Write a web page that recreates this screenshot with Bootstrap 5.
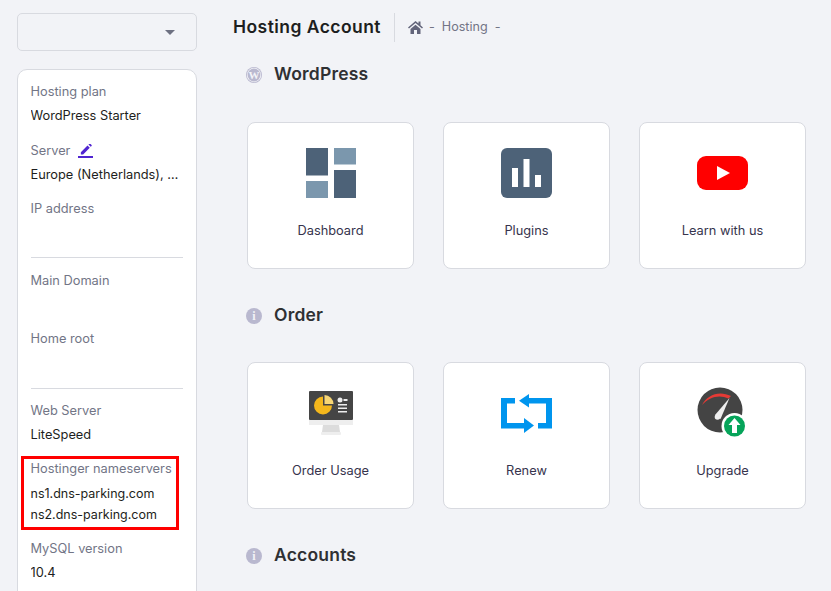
<!DOCTYPE html>
<html lang="en">
<head>
<meta charset="utf-8">
<title>Hosting Account</title>
<link href="https://cdn.jsdelivr.net/npm/bootstrap@5.3.0/dist/css/bootstrap.min.css" rel="stylesheet">
<style>
html,body{height:100%;overflow:hidden}
body{background:#f2f3f7;font-family:Inter,"Liberation Sans",sans-serif;font-size:12.800px;color:#1d1e20}
.shell{height:591px;overflow:hidden;gap:36px;padding:13px 0 0 17px}
.side{width:180px;flex:none}
.pick{height:38px;border:1px solid #d8dae0;border-radius:5px;padding-right:21px;margin-bottom:18px}
.pick i{border:5px solid transparent;border-top-color:#6d7081;border-bottom:0;display:block}
.info{border:1px solid #d8dae0;border-radius:10px 10px 0 0;padding:9px 13px 0 12.5px;height:600px;background:#fff}
.fld{margin-bottom:10px}
.fld-first{margin-bottom:11px}
.lbl{color:#727586;line-height:22px;padding-top:2px}
.val{color:#1d1e20;line-height:22px;padding-top:2px;min-height:24px;white-space:nowrap;overflow:hidden;text-overflow:ellipsis}
.sep{border:0;border-top:1px solid #d8dae0;opacity:1;margin:3px 0 10px}
.sep-b{margin:4px 0 9px}
.ns{margin:2.5px 0 1px;line-height:21px;color:#1d1e20;font-size:12.500px}
.mark-box{position:absolute;left:-10px;top:0;width:158px;height:74px;border:3px solid #f00;pointer-events:none}
.main-col{width:590px;flex:none}
.topline{height:29px;margin-bottom:18px}
.ttl{font-size:17.500px;font-weight:600;letter-spacing:.45px;color:#1d1e20;margin:0 0 2px}
.vbar{width:1px;height:29px;background:#d8dae0;margin:0 13px}
.crumb{color:#727586;gap:7px;font-size:12.600px}
.crumb svg{margin-right:-1px}
.sec{margin-left:13px;height:29px;gap:12px;margin-bottom:32px}
.sec-first{margin-bottom:33px}
.sec h2{font-size:17.500px;font-weight:600;margin:0 0 2px;letter-spacing:.2px;color:#2f3033}
.tiles{margin-left:14px;gap:29px;margin-bottom:32px}
.tile{width:167px;height:147px;border:1px solid #d8dae0;border-radius:8px;background:#fff;padding-top:25px;color:#36344d}
.tile svg{display:block;flex:none;overflow:visible}
.tile span{margin-top:21px;line-height:24px}
</style>
</head>
<body>
<div class="shell d-flex">
  <aside class="side">
    <div class="pick d-flex align-items-center justify-content-end"><i></i></div>
    <div class="card info">
      <div class="fld fld-first"><div class="lbl">Hosting plan</div><div class="val">WordPress Starter</div></div>
      <div class="fld"><div class="lbl d-flex align-items-center gap-2">Server
        <svg width="16" height="14" viewBox="0 0 16 14"><path d="M3 9.200 10 2.200l2.400 2.400-7 7H3z M11 1.200 12 .4a.8.8 0 0 1 1 0l1.300 1.300a.8.8 0 0 1 0 1L13.400 3.600z" fill="#5025d1" transform="translate(0 -.6) scale(.95)"/><rect x="0" y="12" width="15" height="2" fill="#5025d1"/></svg></div>
        <div class="val">Europe (Netherlands), server 12</div></div>
      <div class="fld"><div class="lbl">IP address</div><div class="val"></div></div>
      <hr class="sep">
      <div class="fld"><div class="lbl">Main Domain</div><div class="val"></div></div>
      <div class="fld"><div class="lbl">Home root</div><div class="val"></div></div>
      <hr class="sep sep-b">
      <div class="fld"><div class="lbl">Web Server</div><div class="val">LiteSpeed</div></div>
      <div class="fld position-relative">
        <div class="lbl">Hostinger nameservers</div>
        <div class="ns">ns1.dns-parking.com<br>ns2.dns-parking.com</div>
        <span class="mark-box"></span>
      </div>
      <div class="fld"><div class="lbl">MySQL version</div><div class="val">10.4</div></div>
    </div>
  </aside>
  <main class="main-col">
    <div class="topline d-flex align-items-center">
      <h1 class="ttl">Hosting Account</h1>
      <div class="vbar"></div>
      <div class="crumb d-flex align-items-center">
        <svg width="15" height="13" viewBox="0 0 15 13"><path d="M7.500 0 0 6.500l1 1.100 6.500-5.600 6.500 5.600 1-1.100-2.500-2.200V.6h-2v1.900z M2.500 8 7.500 3.700 12.500 8v5H9V9H6v4H2.500z" fill="#62647a"/></svg>
        <span>-</span><span>Hosting</span><span>-</span>
      </div>
    </div>

    <div class="sec sec-first d-flex align-items-center">
      <svg width="16" height="16" viewBox="0 0 16 16"><circle cx="8" cy="8" r="8" fill="#b9b8cf"/><circle cx="8" cy="8" r="7.200" fill="#f2f3f7"/><circle cx="8" cy="8" r="6.400" fill="#b9b8cf"/><text x="8" y="11.800" text-anchor="middle" font-family="Liberation Serif" font-size="11" font-weight="700" fill="#f2f3f7">W</text></svg>
      <h2>WordPress</h2>
    </div>
    <div class="tiles d-flex">
      <div class="tile d-flex flex-column align-items-center">
        <svg width="50" height="50" viewBox="0 0 50 50"><rect x="0" y="0" width="22" height="27.500" fill="#4d6278"/><rect x="28" y="0" width="22" height="16.500" fill="#7b97ad"/><rect x="28" y="22" width="22" height="28" fill="#4d6278"/><rect x="0" y="33" width="22" height="17" fill="#7b97ad"/></svg>
        <span>Dashboard</span>
      </div>
      <div class="tile d-flex flex-column align-items-center">
        <svg width="51" height="50" viewBox="0 0 51 50"><rect width="51" height="50" rx="6" fill="#4d6278"/><rect x="11" y="20" width="6" height="19" fill="#fff"/><rect x="22.500" y="11" width="6" height="28" fill="#fff"/><rect x="34" y="27" width="6" height="12" fill="#fff"/></svg>
        <span>Plugins</span>
      </div>
      <div class="tile d-flex flex-column align-items-center">
        <svg width="51" height="50" viewBox="0 0 51 50"><rect x="0" y="8" width="51" height="34" rx="9" fill="#f00"/><path d="M20 18 33 25 20 32z" fill="#fff"/></svg>
        <span>Learn with us</span>
      </div>
    </div>

    <div class="sec d-flex align-items-center">
      <svg width="16" height="16" viewBox="0 0 16 16"><circle cx="8" cy="8" r="8" fill="#b9b8cf"/><text x="8" y="12" text-anchor="middle" font-family="Liberation Serif" font-size="12" font-weight="700" fill="#f2f3f7">i</text></svg>
      <h2>Order</h2>
    </div>
    <div class="tiles d-flex">
      <div class="tile d-flex flex-column align-items-center">
        <svg width="50" height="50" viewBox="0 0 50 50"><g transform="translate(0 -1)"><rect x="3" y="4" width="44" height="29" rx="1" fill="#454545"/><rect x="3" y="33" width="44" height="5" fill="#eeeeee"/><path d="M17 38h16l1 7H16z" fill="#dcdcdc"/><rect x="15" y="45" width="20" height="3" rx="1" fill="#eeeeee"/><path d="M17 9.500a9 9 0 1 0 9 9h-9z" fill="#f4b71c"/><path d="M18.500 8a9 9 0 0 1 9 9h-9z" fill="#f7d675"/><circle cx="34" cy="13" r="2.500" fill="#eeeeee"/><rect x="37.500" y="12" width="4" height="2" fill="#eeeeee"/><rect x="32" y="17" width="9" height="1.500" fill="#eeeeee"/><rect x="32" y="20.500" width="9" height="1.500" fill="#eeeeee"/><rect x="32" y="24" width="9" height="1.500" fill="#eeeeee"/></g></svg>
        <span>Order Usage</span>
      </div>
      <div class="tile d-flex flex-column align-items-center">
        <svg width="51" height="50" viewBox="0 0 51 50"><g fill="#0095ee"><path d="M0 10h14v5.500H6V35h21v5.500H0z"/><path d="M23 30 33 37.500 23 45z"/><path d="M27 10h24v30.500H37V35h8V15.500H27z"/><path d="M28 6 18 12.800 28 19.500z"/></g></svg>
        <span>Renew</span>
      </div>
      <div class="tile d-flex flex-column align-items-center">
        <svg width="52" height="50" viewBox="0 0 52 50"><circle cx="23" cy="22" r="22.500" fill="#444"/><path d="M5 17C10 7 22 2 34 8L31.500 10.500C22 6 12 9 5 17z" fill="#e53a35"/><path d="M32.500 10 23.500 31 18 27z" fill="#eee"/><circle cx="20.500" cy="29" r="2.800" fill="#eee"/><circle cx="37.500" cy="38" r="13" fill="#fff"/><circle cx="37.500" cy="38" r="10.500" fill="#06a45a"/><path d="M37.500 30l6 7H40v8h-5v-8h-3.500z" fill="#fff"/></svg>
        <span>Upgrade</span>
      </div>
    </div>

    <div class="sec d-flex align-items-center">
      <svg width="16" height="16" viewBox="0 0 16 16"><circle cx="8" cy="8" r="8" fill="#b9b8cf"/><text x="8" y="12" text-anchor="middle" font-family="Liberation Serif" font-size="12" font-weight="700" fill="#f2f3f7">i</text></svg>
      <h2>Accounts</h2>
    </div>
  </main>
</div>
<script src="https://cdn.jsdelivr.net/npm/bootstrap@5.3.0/dist/js/bootstrap.bundle.min.js"></script>
</body>
</html>
